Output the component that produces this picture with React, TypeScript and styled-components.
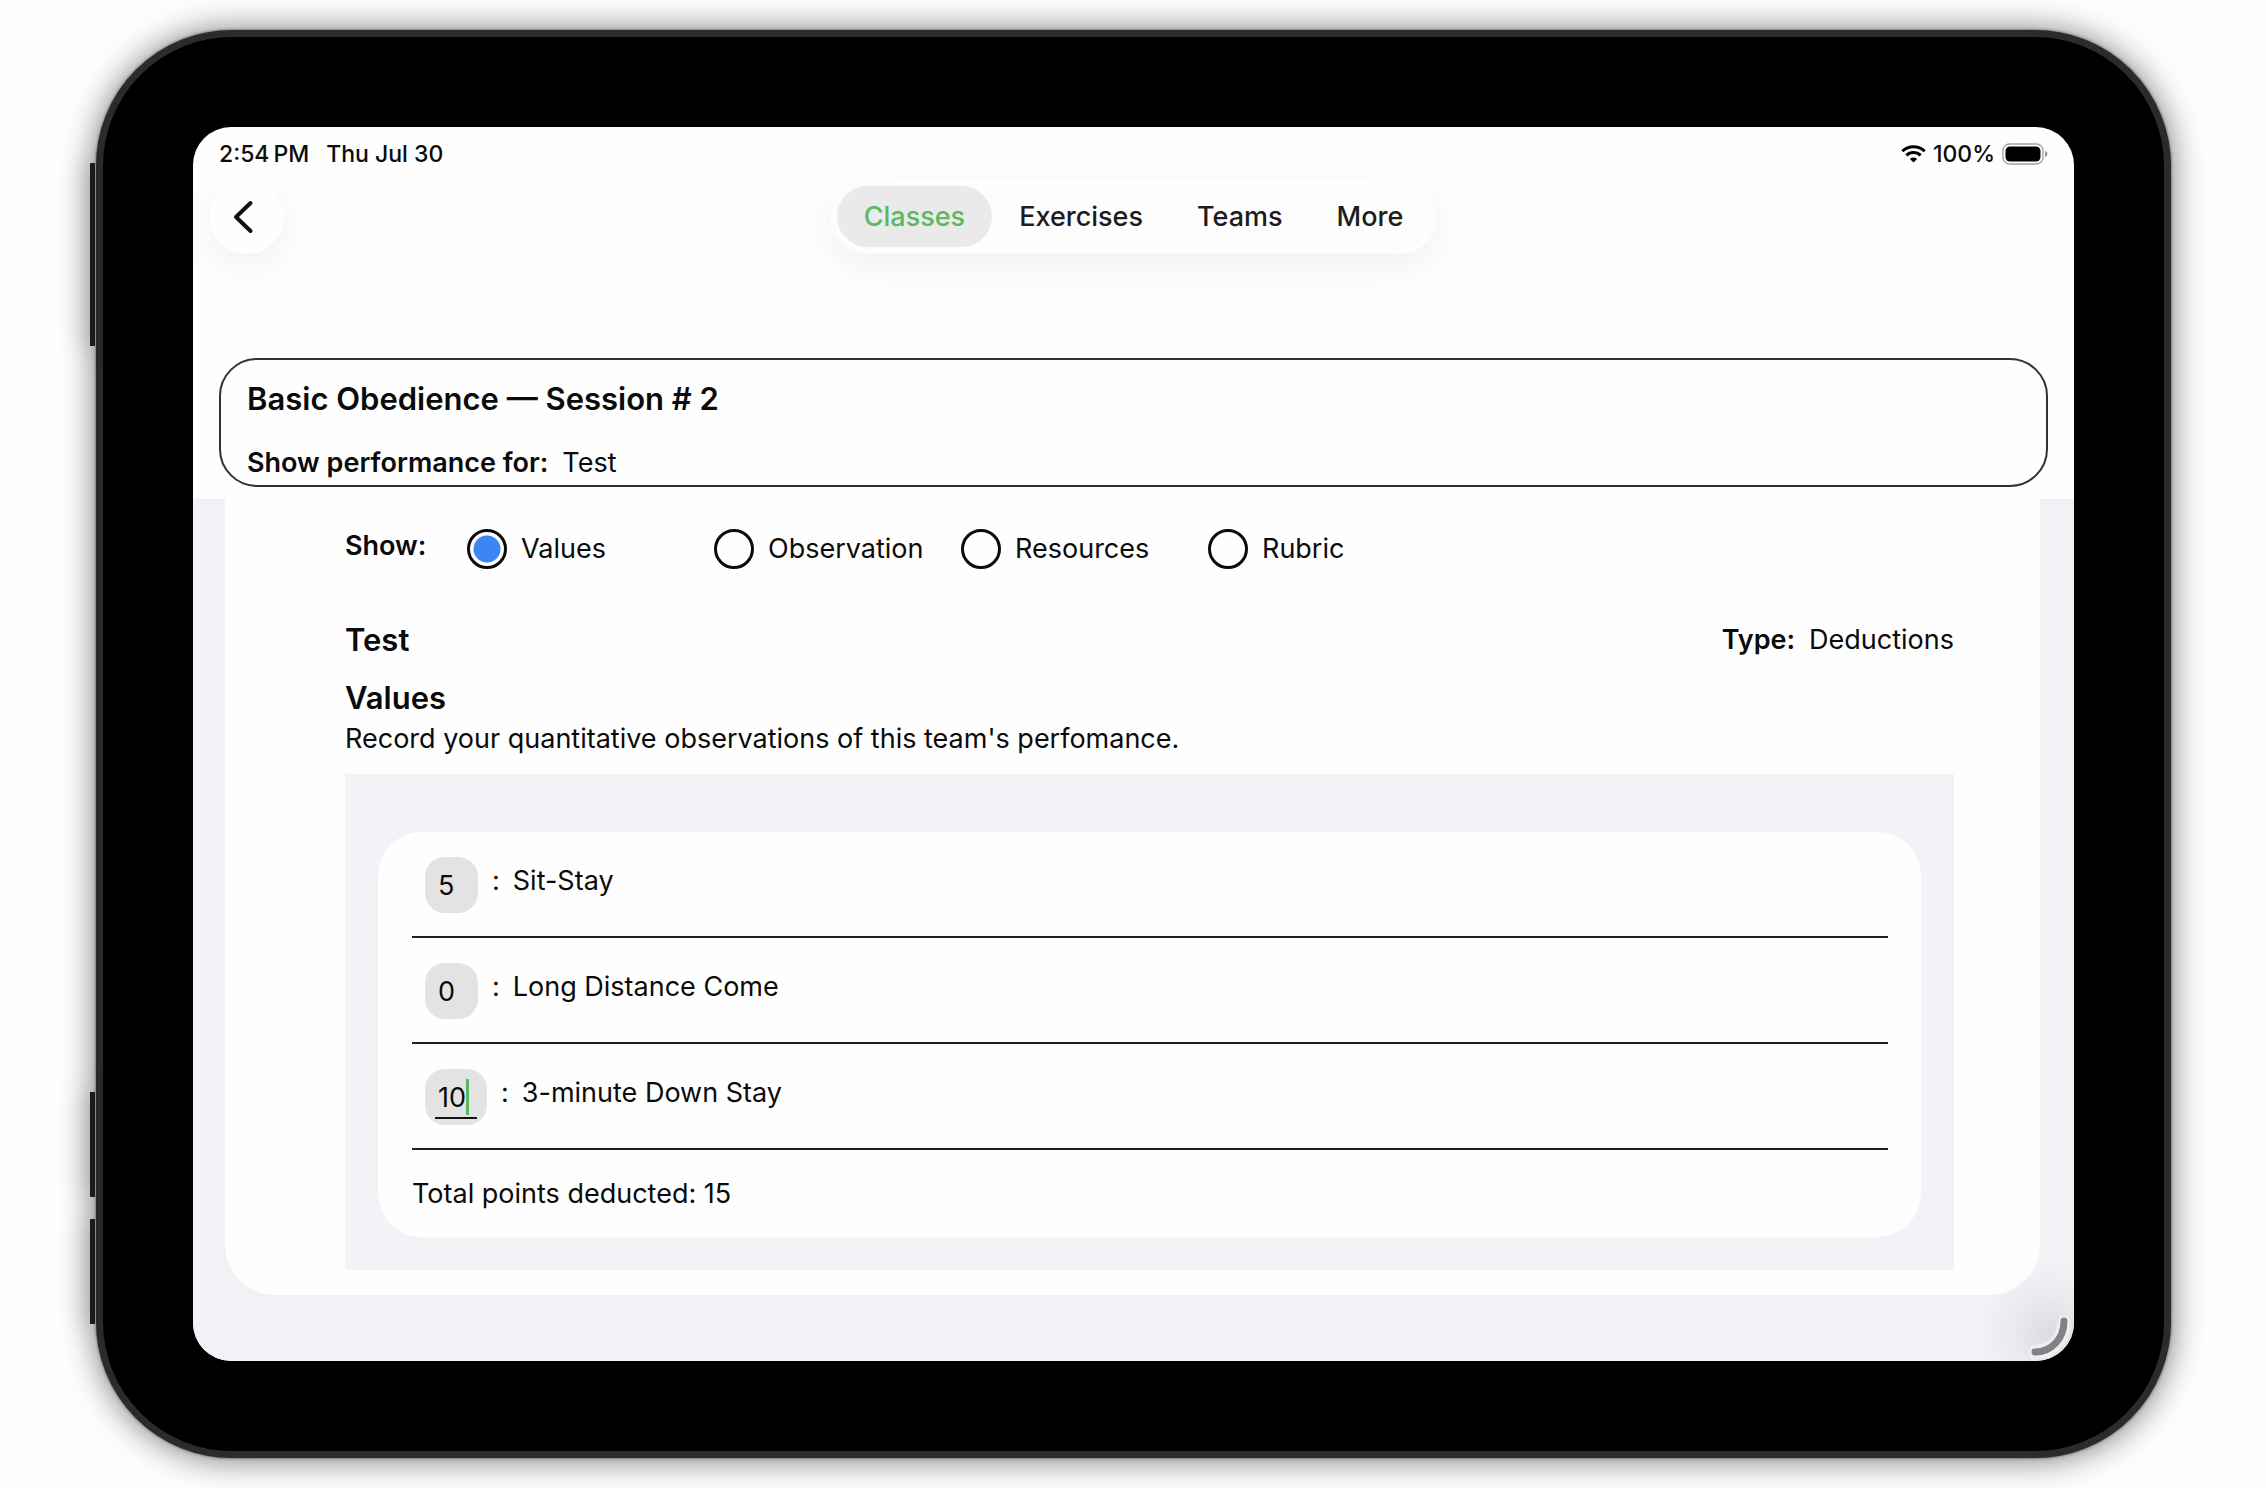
import React, { useState } from "react";
import styled, { createGlobalStyle } from "styled-components";

const GlobalStyle = createGlobalStyle`
  *, *::before, *::after { box-sizing: border-box; }
  body {
    margin: 0;
    background: #fefefe;
    color: #0b0b0b;
    font-family: Inter, "Liberation Sans", sans-serif;
    font-size: 27px;
    line-height: 36px;
  }
  h1, h2, h3, p { margin: 0; }
  button, input { font: inherit; color: inherit; }
`;

const Stage = styled.div`
  display: flex;
  min-height: 100vh;
  padding: 30px 95px 30px 96px;
`;

const Device = styled.div`
  position: relative;
  display: flex;
  flex: 1;
  min-width: 0;
  padding: 90px;
  border: 7px solid #2b2b2b;
  border-radius: 136px;
  background: #000;
  box-shadow: 0 0 3px rgba(0, 0, 0, 0.6), 0 1px 34px rgba(0, 0, 0, 0.55);
`;

const SideKey = styled.span<{ $top: number; $height: number }>`
  position: absolute;
  left: -13px;
  top: ${(p) => p.$top}px;
  width: 5px;
  height: ${(p) => p.$height}px;
  background: #1b1b1b;
  box-shadow: -2px 0 24px rgba(0, 0, 0, 0.5);
`;

const Screen = styled.div`
  position: relative;
  display: flex;
  flex: 1;
  flex-direction: column;
  min-width: 0;
  overflow: hidden;
  border-radius: 38px;
  background: #fefefe;
`;

const StatusBar = styled.div`
  display: flex;
  justify-content: space-between;
  padding: 11px 26px 0;
  font-size: 23px;
  font-weight: 500;
  line-height: 32px;
`;

const StatusGroup = styled.div<{ $gap: number }>`
  display: flex;
  align-items: center;
  gap: ${(p) => p.$gap}px;
`;

const TopNav = styled.header`
  display: grid;
  grid-template-columns: 1fr auto 1fr;
  padding: 9px 16px 0;
`;

const BackButton = styled.button`
  display: grid;
  place-items: center;
  width: 75px;
  height: 75px;
  padding: 0 8px 0 0;
  border: 0;
  border-radius: 50%;
  background: #fefefe;
  box-shadow: 0 12px 40px rgba(0, 0, 0, 0.06);
`;

const Tabs = styled.nav`
  display: flex;
  height: 75px;
  padding: 7px;
  border-radius: 38px;
  background: #fdfdfd;
  box-shadow: 0 12px 40px rgba(0, 0, 0, 0.06);
`;

const Tab = styled.button<{ $active: boolean }>`
  padding: 0 27px;
  border: 0;
  border-radius: 31px;
  background: ${(p) => (p.$active ? "#eaeaea" : "transparent")};
  color: ${(p) => (p.$active ? "#5db762" : "#1c1c1c")};
  font-weight: 500;
`;

const SessionCard = styled.section`
  margin: 104px 26px 12px;
  padding: 19px 26px 4px;
  border: 2px solid #333;
  border-radius: 38px;
`;

const Heading = styled.h2`
  font-size: 31px;
  font-weight: 600;
  line-height: 40px;
`;

const Pair = styled.p`
  display: flex;
  gap: 14px;
`;

const SessionPair = styled(Pair)`
  margin-top: 26px;
`;

const Strong = styled.span`
  font-weight: 600;
`;

const Body = styled.main`
  flex: 1;
  padding: 0 34px 66px 32px;
  background: #f1f1f6;
`;

const Sheet = styled.div`
  padding: 30px 86px 25px 120px;
  border-radius: 0 0 50px 50px;
  background: #fefefe;
`;

const RadioGroup = styled.div`
  display: grid;
  grid-template-columns: 122px repeat(4, 247px);
  align-items: start;
`;

const RadioTitle = styled.span`
  font-weight: 600;
  line-height: 34px;
`;

const RadioOption = styled.label`
  display: flex;
  align-items: center;
  gap: 14px;
  height: 40px;
`;

const Radio = styled.input`
  appearance: none;
  flex: none;
  width: 40px;
  height: 40px;
  margin: 0;
  border: 3px solid #0b0b0b;
  border-radius: 50%;
  background: #fefefe;
  &:checked {
    background: radial-gradient(circle, #3d85f3 13px, #fefefe 14px);
  }
`;

const TitleRow = styled.div`
  display: flex;
  align-items: center;
  justify-content: space-between;
  margin: 51px 0 18px;
`;

const Hint = styled.p`
  margin: 3px 0 17px;
`;

const Panel = styled.div`
  padding: 58px 33px 33px;
  background: #f2f2f7;
`;

const ScoreCard = styled.form`
  padding: 0 33px 0 34px;
  border-radius: 44px;
  background: #fefefe;
`;

const ScoreRow = styled.div`
  display: flex;
  align-items: flex-start;
  height: 106px;
  padding: 25px 0 0 13px;
  border-bottom: 2px solid #222;
  line-height: 48px;
`;

const Field = styled.span<{ $wide: boolean }>`
  position: relative;
  width: ${(p) => (p.$wide ? 62 : 53)}px;
  height: 56px;
  padding: 8px 10px 0;
  border-radius: 20px;
  background: #e3e3e3;
`;

const ScoreInput = styled.input<{ $active: boolean }>`
  display: block;
  width: 100%;
  height: 42px;
  padding: 0 0 0 3px;
  border: 0;
  border-bottom: 2px solid ${(p) => (p.$active ? "#111" : "transparent")};
  outline: 0;
  background: transparent;
  line-height: 40px;
  caret-color: transparent;
`;

const Caret = styled.span`
  position: absolute;
  top: 10px;
  left: 41px;
  width: 3px;
  height: 36px;
  background: #5db762;
`;

const ScoreLabel = styled.label`
  display: flex;
  gap: 13px;
  margin-left: 14px;
`;

const Total = styled.p`
  padding: 26px 0 25px;
`;

const ResizeGrip = styled.svg`
  position: absolute;
  right: 0;
  bottom: 0;
`;

const tabs = ["Classes", "Exercises", "Teams", "More"];
const views = ["Values", "Observation", "Resources", "Rubric"];
const exercises = ["Sit-Stay", "Long Distance Come", "3-minute Down Stay"];
const activeField = 2;

const WifiIcon = () => (
  <svg width="25" height="18" viewBox="0 0 25 18" fill="none" stroke="#000" strokeWidth="3" aria-hidden="true">
    <path d="M1.3 6.2a16 16 0 0 1 22.4 0" />
    <path d="M5.4 10.4a10.2 10.2 0 0 1 14.2 0" />
    <path d="M12.5 17.6 8.9 14a5.2 5.2 0 0 1 7.2 0z" fill="#000" stroke="none" />
  </svg>
);

const BatteryIcon = () => (
  <svg width="46" height="22" viewBox="0 0 46 22" aria-hidden="true">
    <rect x="1" y="1" width="40" height="20" rx="6.5" fill="none" stroke="#a3a3a3" strokeWidth="1.4" />
    <rect x="3.5" y="3.5" width="35" height="15" rx="4.5" fill="#000" />
    <path d="M43.2 8v6c1.6-.5 2.2-1.6 2.2-3s-.6-2.500-2.200-3z" fill="#8d8d8d" />
  </svg>
);

export default function App() {
  const [tab, setTab] = useState("Classes");
  const [view, setView] = useState("Values");
  const [scores, setScores] = useState(["5", "0", "10"]);
  const total = scores.reduce((sum, s) => sum + (Number(s) || 0), 0);

  return (
    <>
      <GlobalStyle />
      <Stage>
        <Device>
          <SideKey $top={126} $height={183} />
          <SideKey $top={1055} $height={105} />
          <SideKey $top={1182} $height={105} />
          <Screen>
            <StatusBar>
              <StatusGroup $gap={17}>
                <span>2:54&#8201;PM</span>
                <span>Thu Jul 30</span>
              </StatusGroup>
              <StatusGroup $gap={7}>
                <WifiIcon />
                <span>100%</span>
                <BatteryIcon />
              </StatusGroup>
            </StatusBar>

            <TopNav>
              <BackButton type="button" aria-label="Back">
                <svg width="22" height="34" viewBox="0 0 22 34" fill="none" stroke="#111" strokeWidth="4" strokeLinecap="round" strokeLinejoin="round">
                  <path d="M18.500 3 4 17l14.500 14" />
                </svg>
              </BackButton>
              <Tabs>
                {tabs.map((t) => (
                  <Tab key={t} type="button" $active={t === tab} onClick={() => setTab(t)}>
                    {t}
                  </Tab>
                ))}
              </Tabs>
            </TopNav>

            <SessionCard>
              <Heading as="h1">Basic Obedience — Session # 2</Heading>
              <SessionPair>
                <Strong>Show performance for:</Strong>
                <span>Test</span>
              </SessionPair>
            </SessionCard>

            <Body>
              <Sheet>
                <RadioGroup role="radiogroup" aria-labelledby="show-title">
                  <RadioTitle id="show-title">Show:</RadioTitle>
                  {views.map((v) => (
                    <RadioOption key={v}>
                      <Radio type="radio" name="view" checked={v === view} onChange={() => setView(v)} />
                      {v}
                    </RadioOption>
                  ))}
                </RadioGroup>

                <TitleRow>
                  <Heading>Test</Heading>
                  <Pair>
                    <Strong>Type:</Strong>
                    <span>Deductions</span>
                  </Pair>
                </TitleRow>

                <Heading as="h3">Values</Heading>
                <Hint>Record your quantitative observations of this team's perfomance.</Hint>

                <Panel>
                  <ScoreCard>
                    {exercises.map((name, i) => (
                      <ScoreRow key={name}>
                        <Field $wide={scores[i].length > 1}>
                          <ScoreInput
                            id={`score-${i}`}
                            type="text"
                            inputMode="numeric"
                            value={scores[i]}
                            $active={i === activeField}
                            onChange={(e) => setScores(scores.map((s, n) => (n === i ? e.target.value : s)))}
                          />
                          {i === activeField && <Caret />}
                        </Field>
                        <ScoreLabel htmlFor={`score-${i}`}>
                          <span>:</span>
                          <span>{name}</span>
                        </ScoreLabel>
                      </ScoreRow>
                    ))}
                    <Total>Total points deducted: {total}</Total>
                  </ScoreCard>
                </Panel>
              </Sheet>
            </Body>

            <ResizeGrip width="100" height="100" viewBox="0 0 100 100" fill="none" aria-hidden="true">
              <defs>
                <radialGradient id="grip-shade" cx="76" cy="72" r="70" gradientTransform="translate(0 0)" gradientUnits="userSpaceOnUse">
                  <stop offset="0" stopColor="#000" stopOpacity="0.09" />
                  <stop offset="0.5" stopColor="#000" stopOpacity="0.035" />
                  <stop offset="1" stopColor="#000" stopOpacity="0" />
                </radialGradient>
              </defs>
              <rect width="100" height="100" fill="url(#grip-shade)" />
              <path d="M62 91C78 91 90 77 90 61" stroke="#f1f1f4" strokeOpacity="0.8" strokeWidth="14" strokeLinecap="round" />
              <path d="M61 91C78 91 90 77 90 60" stroke="#828286" strokeWidth="7" strokeLinecap="round" />
            </ResizeGrip>
          </Screen>
        </Device>
      </Stage>
    </>
  );
}
